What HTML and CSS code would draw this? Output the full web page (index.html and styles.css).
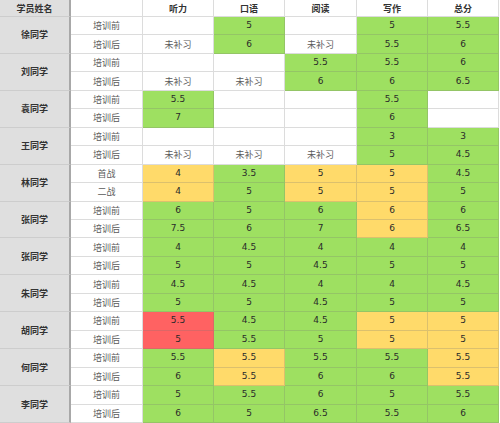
FILE: index.html
```html
<!DOCTYPE html>
<html lang="zh">
<head>
<meta charset="utf-8">
<title>成绩表</title>
<link rel="stylesheet" href="styles.css">
</head>
<body>
<div class="sheet">
  <div class="c name hd">学员姓名</div><div class="c"></div><div class="c hd">听力</div><div class="c hd">口语</div><div class="c hd">阅读</div><div class="c hd">写作</div><div class="c hd">总分</div>

  <div class="c name">徐同学</div>
  <div class="c lb">培训前</div><div class="c"></div><div class="c g">5</div><div class="c"></div><div class="c g">5</div><div class="c g">5.5</div>
  <div class="c lb">培训后</div><div class="c na">未补习</div><div class="c g">6</div><div class="c na">未补习</div><div class="c g">5.5</div><div class="c g">6</div>

  <div class="c name">刘同学</div>
  <div class="c lb">培训前</div><div class="c"></div><div class="c"></div><div class="c g">5.5</div><div class="c g">5.5</div><div class="c g">6</div>
  <div class="c lb">培训后</div><div class="c na">未补习</div><div class="c na">未补习</div><div class="c g">6</div><div class="c g">6</div><div class="c g">6.5</div>

  <div class="c name">袁同学</div>
  <div class="c lb">培训前</div><div class="c g">5.5</div><div class="c"></div><div class="c"></div><div class="c g">5.5</div><div class="c"></div>
  <div class="c lb">培训后</div><div class="c g">7</div><div class="c"></div><div class="c"></div><div class="c g">6</div><div class="c"></div>

  <div class="c name">王同学</div>
  <div class="c lb">培训前</div><div class="c"></div><div class="c"></div><div class="c"></div><div class="c g">3</div><div class="c g">3</div>
  <div class="c lb">培训后</div><div class="c na">未补习</div><div class="c na">未补习</div><div class="c na">未补习</div><div class="c g">5</div><div class="c g">4.5</div>

  <div class="c name">林同学</div>
  <div class="c lb">首战</div><div class="c y">4</div><div class="c g">3.5</div><div class="c y">5</div><div class="c y">5</div><div class="c g">4.5</div>
  <div class="c lb">二战</div><div class="c y">4</div><div class="c g">5</div><div class="c y">5</div><div class="c y">5</div><div class="c g">5</div>

  <div class="c name">张同学</div>
  <div class="c lb">培训前</div><div class="c g">6</div><div class="c g">5</div><div class="c g">6</div><div class="c y">6</div><div class="c g">6</div>
  <div class="c lb">培训后</div><div class="c g">7.5</div><div class="c g">6</div><div class="c g">7</div><div class="c y">6</div><div class="c g">6.5</div>

  <div class="c name">张同学</div>
  <div class="c lb">培训前</div><div class="c g">4</div><div class="c g">4.5</div><div class="c g">4</div><div class="c g">4</div><div class="c g">4</div>
  <div class="c lb">培训后</div><div class="c g">5</div><div class="c g">5</div><div class="c g">4.5</div><div class="c g">5</div><div class="c g">5</div>

  <div class="c name">朱同学</div>
  <div class="c lb">培训前</div><div class="c g">4.5</div><div class="c g">4.5</div><div class="c g">4</div><div class="c g">4</div><div class="c g">4.5</div>
  <div class="c lb">培训后</div><div class="c g">5</div><div class="c g">5</div><div class="c g">4.5</div><div class="c g">5</div><div class="c g">5</div>

  <div class="c name">胡同学</div>
  <div class="c lb">培训前</div><div class="c r">5.5</div><div class="c g">4.5</div><div class="c g">4.5</div><div class="c y">5</div><div class="c y">5</div>
  <div class="c lb">培训后</div><div class="c r">5</div><div class="c g">5.5</div><div class="c g">5</div><div class="c y">5</div><div class="c y">5</div>

  <div class="c name">何同学</div>
  <div class="c lb">培训前</div><div class="c g">5.5</div><div class="c y">5.5</div><div class="c g">5.5</div><div class="c g">5.5</div><div class="c y">5.5</div>
  <div class="c lb">培训后</div><div class="c g">6</div><div class="c y">5.5</div><div class="c g">6</div><div class="c g">6</div><div class="c y">5.5</div>

  <div class="c name">李同学</div>
  <div class="c lb">培训前</div><div class="c g">5</div><div class="c g">5.5</div><div class="c g">6</div><div class="c g">5</div><div class="c g">5.5</div>
  <div class="c lb">培训后</div><div class="c g">6</div><div class="c g">5</div><div class="c g">6.5</div><div class="c g">5.5</div><div class="c g">6</div>
</div>
</body>
</html>
```

FILE: styles.css
```css
html, body {
  margin: 0;
  padding: 0;
  background: #ffffff;
}

.sheet {
  display: grid;
  grid-template-columns: 71px 72px 71px 71px 72px 71px 71px;
  grid-template-rows: 17px repeat(22, 1fr);
  width: 499px;
  height: 423px;
  font-family: "DejaVu Sans", "Noto Sans CJK SC", sans-serif;
  font-size: 9px;
  color: #2a2a2a;
}

.c {
  display: flex;
  align-items: center;
  justify-content: center;
  box-sizing: border-box;
  border-right: 1px solid rgba(120, 120, 120, 0.26);
  border-bottom: 1px solid rgba(120, 120, 120, 0.26);
  background: #ffffff;
  line-height: 1;
  white-space: nowrap;
}

.name {
  grid-row: span 2;
  background: #dfdfdf;
  border-right: 2px solid #a8a8a8;
  border-bottom: 1px solid #cdcdcd;
  font-family: "Noto Sans CJK SC", sans-serif;
  font-weight: bold;
  color: #333333;
}

.sheet > .name:first-child {
  grid-row: span 1;
}

.hd {
  font-family: "Noto Sans CJK SC", sans-serif;
  font-weight: bold;
  color: #333333;
}

.lb, .na {
  font-family: "Noto Sans CJK SC", sans-serif;
  color: #5a5a5a;
}

.g { background: #9ee061; }
.y { background: #ffda6a; }
.r { background: #ff6262; }
```
